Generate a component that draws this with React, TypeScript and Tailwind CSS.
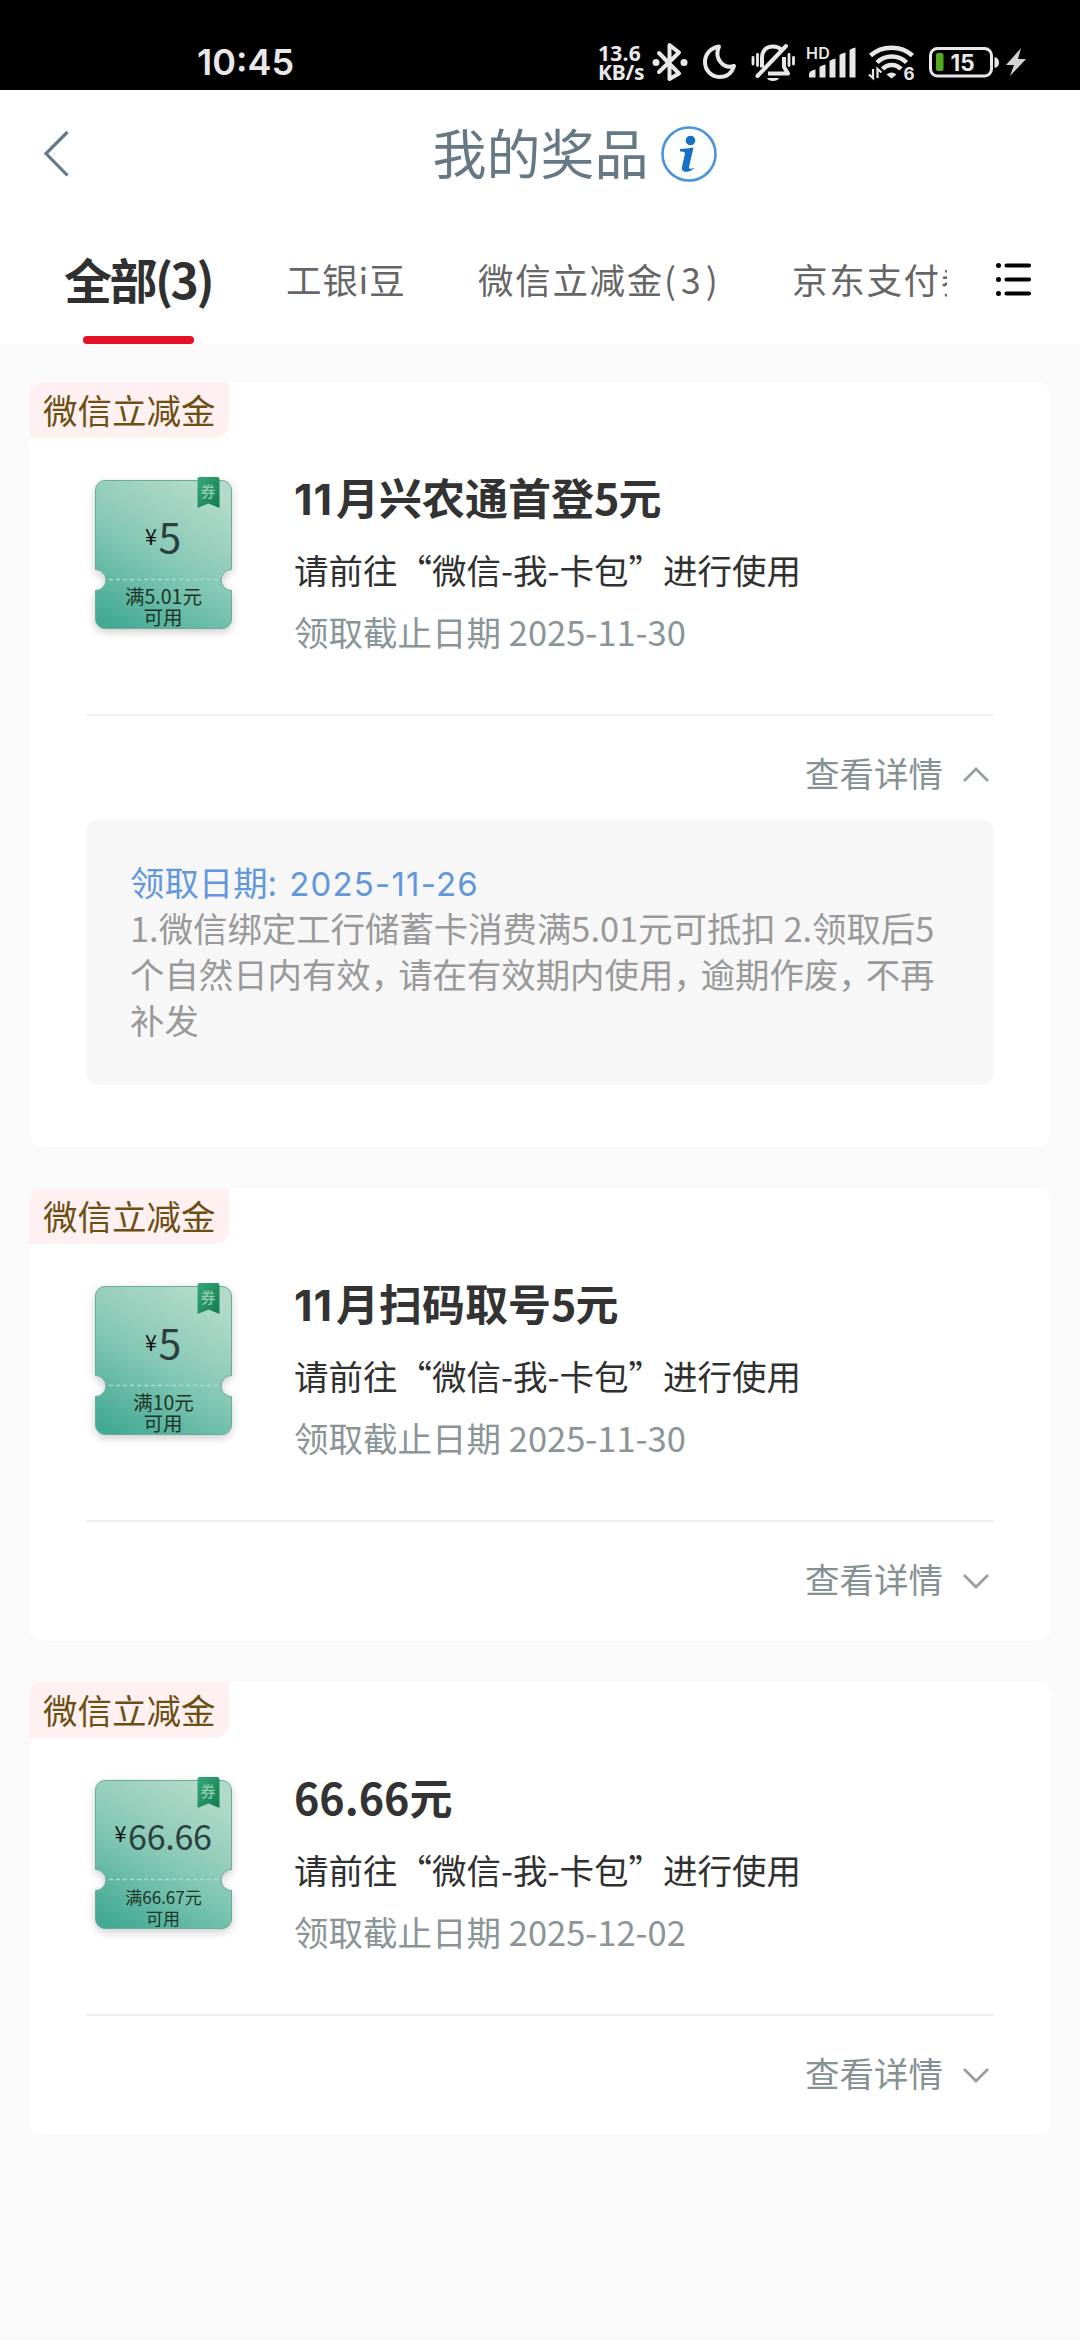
import clsx from 'clsx';

interface IPrize {
  tag: string;
  title: string[];
  amount: string;
  amountSize: number;
  amountY: number;
  limit: string;
  limitSize: number;
  deadline: string;
  receivedAt?: string;
  rules?: string[];
}

const PRIZES: IPrize[] = [
  {
    tag: '微信立减金',
    title: ['11', '月兴农通首登', '5', '元'],
    amount: '5',
    amountSize: 41,
    amountY: 77,
    limit: '满5.01元',
    limitSize: 19.5,
    deadline: '2025-11-30',
    receivedAt: '2025-11-26',
    rules: [
      '1.微信绑定工行储蓄卡消费满5.01元可抵扣 2.领取后5',
      '个自然日内有效，请在有效期内使用，逾期作废，不再',
      '补发',
    ],
  },
  {
    tag: '微信立减金',
    title: ['11', '月扫码取号', '5', '元'],
    amount: '5',
    amountSize: 41,
    amountY: 77,
    limit: '满10元',
    limitSize: 19.5,
    deadline: '2025-11-30',
  },
  {
    tag: '微信立减金',
    title: ['', '', '66.66', '元'],
    amount: '66.66',
    amountSize: 34,
    amountY: 74,
    limit: '满66.67元',
    limitSize: 17,
    deadline: '2025-12-02',
  },
];

const StatusBar = () => {
  return (
    <div className="flex h-[90px] items-start bg-black pt-10 font-['Inter','Noto_Sans_CJK_SC',sans-serif] text-[#e8e8e8]">
      <span className="ml-[197px] mt-1 w-[109px] text-[36px] font-semibold leading-[37px]">
        10:45
      </span>
      <div className="ml-[292px] mt-[3px] w-[50px] font-['Noto_Sans',sans-serif] text-[21px] font-bold leading-5 tracking-[-0.2px]">
        <div className="tracking-[0.300px]">13.6</div>
        <div className="-mt-px">KB/s</div>
      </div>
      <svg className="-ml-px h-11 w-11" viewBox="0 0 44 44" fill="none" stroke="currentColor" strokeWidth="4">
        <path d="M12 13 32 33.500 22.500 39V5L32 12.500 12 32" strokeLinejoin="round" strokeLinecap="round" />
        <circle cx="9" cy="22.500" r="3.500" fill="currentColor" stroke="none" />
        <circle cx="37" cy="22.500" r="3.500" fill="currentColor" stroke="none" />
      </svg>
      <svg className="ml-[8px] h-11 w-11" viewBox="0 0 44 44" fill="none" stroke="currentColor" strokeWidth="4">
        <path d="M20 6.500C11 8 6 14.500 6 22c0 8.500 6.500 15 14.500 15 7.500 0 12.500-4.500 14.500-11C25 29.500 14.500 19 20 6.500Z" strokeLinejoin="round" />
      </svg>
      <svg className="ml-[6px] h-11 w-12" viewBox="0 0 48 44" fill="none" stroke="currentColor" strokeWidth="4">
        <path d="M13 27.500V18C13 11 17 6.500 24 6.500c3 0 6 1 8 3M35 17v10l4 6.500H19" strokeLinejoin="round" />
        <path d="M8.500 36 37 6" strokeLinecap="round" />
        <path d="M18 38h12c-1 4-11 4-12 0Z" fill="currentColor" stroke="none" />
        <path d="M4 17.500v6.500M8.500 14.500v11M40 14.500v11M44.500 17.500v6.500" strokeWidth="2.800" strokeLinecap="round" />
      </svg>
      <svg className="ml-[9px] h-11 w-[50px]" viewBox="0 0 50 44" fill="currentColor">
        <text x="0" y="19" fontSize="16" fontWeight="600" letterSpacing=".2">
          HD
        </text>
        <path d="M3 37.500v-3q0-4 6.500-5v8ZM13.500 37.500V27q2-2 6-2.500v13ZM23.500 37.500V21q2-2 6-2.500v19ZM33.500 37.500V15q2-2 6-2.500v25ZM43.500 37.500V10q2-2 6-2.500v30Z" />
      </svg>
      <svg className="ml-[12px] h-11 w-[50px]" viewBox="0 0 50 44" fill="none" stroke="currentColor" strokeWidth="4.500">
        <path d="M2.500 15.500C14 5 33 5 44.500 15.500M9 22.500c8-8 21.500-8 29.500 0M14.500 29c5-5.500 13.500-5.500 18.500 0" />
        <path d="M18.500 34.500q5-4 10 0l-5 4Z" fill="currentColor" stroke="none" />
        <path d="M5 29v9l-4-3.500M9.500 38v-9l4 3.500" strokeWidth="2.200" />
        <text x="35.500" y="40" fontSize="17" fontWeight="700" fill="currentColor" stroke="none">
          6
        </text>
      </svg>
      <svg className="ml-[10px] h-11 w-[100px]" viewBox="0 0 100 44" fill="none">
        <rect x="2.500" y="8.500" width="61" height="27.500" rx="7" stroke="currentColor" strokeWidth="3" />
        <path d="M66.500 17q4.500 1 4.500 5.500t-4.500 5.500Z" fill="currentColor" />
        <rect x="8" y="13" width="7.500" height="18" rx="2" fill="#55a91f" />
        <text x="22.500" y="31" fontSize="22.500" fontWeight="700" fill="currentColor">
          15
        </text>
        <path d="M93 8 78 25h8l-4 11 16-17h-8Z" fill="#d2d2d2" />
      </svg>
    </div>
  );
};

const Header = () => {
  return (
    <header className="relative flex h-[127px] items-center justify-center bg-white">
      <svg
        className="absolute left-[42px] top-[40px] h-[48px] w-[28px]"
        viewBox="0 0 28 48"
        fill="none"
        stroke="#64798a"
        strokeWidth="3.200"
      >
        <path d="M25.500 2 4 23.500 25.500 45.500" />
      </svg>
      <h1 className="ml-[71px] pb-[3px] text-[54px] leading-none text-[#667883]">
        我的奖品
      </h1>
      <svg className="ml-[10px] h-[60px] w-[60px]" viewBox="0 0 60 60" fill="none">
        <circle cx="30" cy="30" r="26.500" stroke="#4a94dc" strokeWidth="2.600" />
        <circle cx="31.500" cy="16.500" r="4.800" fill="#1571c6" />
        <path d="M21 25q7-.5 13.500-1.500L30 43c0 2.500 2.500 2 5.500.500-1.500 4-14.500 7.500-12.500-1l3-13q0-2.500-5-2Z" fill="#1571c6" />
      </svg>
    </header>
  );
};

const Tabs = () => {
  return (
    <nav className="flex h-[127px] bg-white">
      <ul className="flex h-full w-[947px] items-center overflow-hidden whitespace-nowrap text-[35.500px] tracking-[1.700px] text-[#666]">
        <li className="relative ml-[64px] flex h-full w-[148px] shrink-0 items-center justify-center pb-[5px] text-[48px] font-bold tracking-[-2.500px] text-[#303030]">
          全部(3)
          <i className="absolute bottom-0 left-[19px] h-2 w-[111px] rounded bg-[#e60f28]" />
        </li>
        <li className="ml-[74px] w-[192px] shrink-0 pb-[3px] tracking-[0.800px]">工银i豆</li>
        <li className="w-[314px] shrink-0 pb-[3px]">
          微信立减金<span className="tracking-[5px]">(3)</span>
        </li>
        <li className="shrink-0 pb-[3px] tracking-[1.700px]">京东支付券</li>
      </ul>
      <svg className="ml-[45px] mt-[40px] h-[44px] w-[44px]" viewBox="0 0 44 44" fill="none" stroke="#000" strokeWidth="4.200" strokeLinecap="round">
        <path d="M6.500 8.500h.01M6.500 22.500h.01M6.500 36.500h.01" strokeWidth="5" />
        <path d="M14.500 8.500H37M14.500 22.500H37M14.500 36.500H37" />
      </svg>
    </nav>
  );
};

const Coupon = ({ data }: { data: IPrize }) => {
  return (
    <svg
      className="h-[160px] w-[150px] overflow-visible"
      viewBox="0 0 150 160"
      textAnchor="middle"
    >
      <defs>
        <linearGradient id="ticket" x1="0.15" y1="1" x2="0.7" y2="0">
          <stop offset="0" stopColor="#42a994" />
          <stop offset="0.5" stopColor="#84c8b4" />
          <stop offset="1" stopColor="#b2dac9" />
        </linearGradient>
        <linearGradient id="ribbon" x1="0" y1="0" x2="1" y2="1">
          <stop offset="0" stopColor="#38a878" />
          <stop offset="1" stopColor="#117c4f" />
        </linearGradient>
      </defs>
      <path
        className="drop-shadow-[0_3px_4px_rgba(0,0,0,0.2)]"
        d="M10 .5H127a9.500 9.500 0 0 1 9.500 9.500V89.500a10.500 10.500 0 0 0 0 21V139a9.500 9.500 0 0 1-9.500 9.500H10A9.500 9.500 0 0 1 .5 139V110.500a10.500 10.500 0 0 0 0-21V10A9.500 9.500 0 0 1 10 .5Z"
        fill="url(#ticket)"
        stroke="#68ac99"
      />
      <path d="M14 99.500H123" stroke="#a5dccd" strokeWidth="1.600" strokeDasharray="4 3" />
      <path d="M102.500-1q0-2 2-2H122q2.500 0 2.500 2.500V28l-11-4.500-11 4.500Z" fill="url(#ribbon)" />
      <text x="113" y="17" fontSize="15" fontWeight="500" fill="#8fcbb0">
        券
      </text>
      <text x="68" y={data.amountY - 4} fill="#2c3f3e" fontSize={data.amountSize} letterSpacing="-0.3">
        <tspan fontSize="21.500" dy="-8" fill="#111">
          ¥
        </tspan>
        <tspan dx="2" dy="8">{data.amount}</tspan>
      </text>
      <g fill="#1d3325" fontSize={data.limitSize}>
        <text x="68.500" y="124">{data.limit}</text>
        <text x="68" y="144.500">可用</text>
      </g>
    </svg>
  );
};

const RuleLine = ({ text }: { text: string }) => {
  return (
    <p className="whitespace-nowrap">
      {text.split('，').map((part, idx) => (
        <span key={idx}>
          {idx > 0 && <span className="tracking-[-7px]">，</span>}
          {part}
        </span>
      ))}
    </p>
  );
};

const PrizeItem = ({ data }: { data: IPrize }) => {
  const isOpen = !!data.rules;
  const [lead, name, num, unit] = data.title;

  return (
    <li className="rounded-[14px] bg-white">
      <div className="flex h-14 w-[200px] items-center rounded-br-[14px] rounded-tl-[14px] bg-[#fff0f1] pb-[2px] pl-[14px] text-[34.500px] leading-none text-[#6c4f12]">
        {data.tag}
      </div>
      <div className="mx-[57px] flex h-[278px] border-b-2 border-[#eeeff0] pt-[42px]">
        <div className="ml-[9px] w-[199px]">
          <Coupon data={data} />
        </div>
        <div className="-mt-[3px] whitespace-nowrap text-[34.500px]">
          <h2 className="h-[38px] text-[43px] font-bold leading-[38px] text-[#333]">
            {lead && (
              <span className="inline-block w-[42px] font-['Inter',sans-serif] tracking-[1px]">
                {lead}
              </span>
            )}
            {name}
            <span className={clsx(lead && 'tracking-[-1px]')}>{num}</span>
            {unit}
          </h2>
          <p className="mt-[29px] leading-[50px] text-[#303030]">
            请前往“微信-我-卡包”进行使用
          </p>
          <p className="mt-[12px] leading-[50px] text-[#8a9598]">
            领取截止日期 {data.deadline}
          </p>
        </div>
      </div>
      <div className="mx-[58px] flex h-[119px] items-center justify-end text-[34.500px] text-[#869194]">
        <span className="pb-[6px]">查看详情</span>
        <svg
          className={clsx('-mt-[2px] ml-[18px] mr-[2px] h-[20px] w-[30px]', isOpen && 'rotate-180')}
          viewBox="0 0 30 20"
          fill="none"
          stroke="#999f9f"
          strokeWidth="2.800"
        >
          <path d="M3 4 15 16 27 4" />
        </svg>
      </div>
      {data.rules && (
        <div className="mx-[57px] -mt-[15px] mb-[62px] h-[265px] rounded-xl bg-[#f7f7f7] pl-[44px] pt-[38px] text-[34.400px] leading-[46px] text-[#999]">
          <p className="h-[46px] text-[#6297dc]">
            领取日期:
            <span className="ml-[12px] font-['Inter',sans-serif] text-[33px] tracking-[1.200px]">
              {data.receivedAt}
            </span>
          </p>
          {data.rules.map((rule) => (
            <RuleLine key={rule} text={rule} />
          ))}
        </div>
      )}
    </li>
  );
};

const App = () => {
  return (
    <div className="h-[2340px] w-[1080px] overflow-hidden bg-[#fafafa] font-['Noto_Sans_CJK_SC',sans-serif]" lang="zh-CN">
      <StatusBar />
      <Header />
      <Tabs />
      <ul className="mx-[29px] mt-[38px] grid gap-[41px]">
        {PRIZES.map((prize) => (
          <PrizeItem key={prize.title.join('')} data={prize} />
        ))}
      </ul>
    </div>
  );
};

export default App;
